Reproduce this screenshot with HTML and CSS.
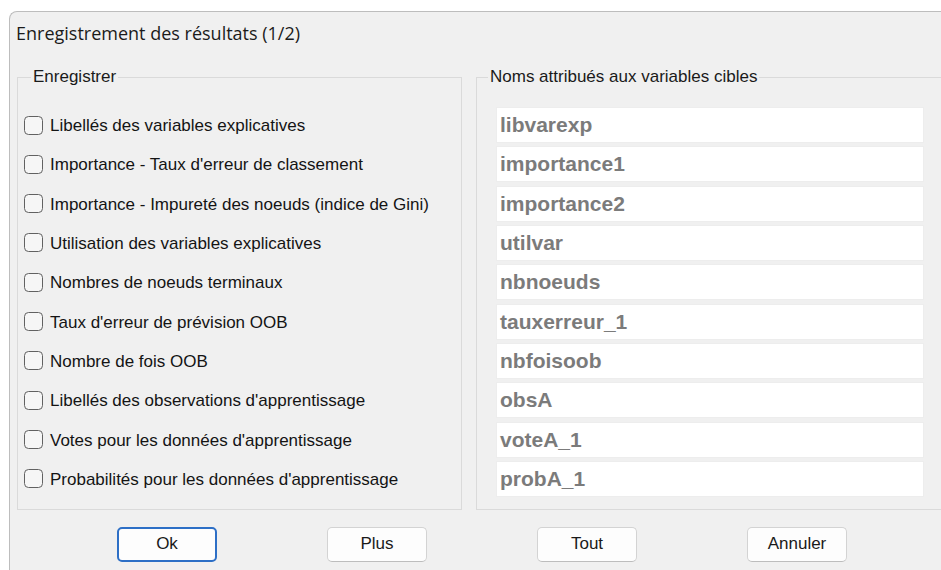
FILE: index.html
```html
<!DOCTYPE html>
<html lang="fr">
<head>
<meta charset="utf-8">
<title>Enregistrement des résultats (1/2)</title>
<link rel="stylesheet" href="styles.css">
</head>
<body>
<div class="window">
  <div class="titlebar">Enregistrement des résultats (1/2)</div>

  <div class="groups">
    <fieldset class="group group-save">
      <legend>Enregistrer</legend>
      <div class="rows">
        <label class="check"><span class="box"></span>Libellés des variables explicatives</label>
        <label class="check"><span class="box"></span>Importance - Taux d'erreur de classement</label>
        <label class="check"><span class="box"></span>Importance - Impureté des noeuds (indice de Gini)</label>
        <label class="check"><span class="box"></span>Utilisation des variables explicatives</label>
        <label class="check"><span class="box"></span>Nombres de noeuds terminaux</label>
        <label class="check"><span class="box"></span>Taux d'erreur de prévision OOB</label>
        <label class="check"><span class="box"></span>Nombre de fois OOB</label>
        <label class="check"><span class="box"></span>Libellés des observations d'apprentissage</label>
        <label class="check"><span class="box"></span>Votes pour les données d'apprentissage</label>
        <label class="check"><span class="box"></span>Probabilités pour les données d'apprentissage</label>
      </div>
    </fieldset>

    <fieldset class="group group-names">
      <legend>Noms attribués aux variables cibles</legend>
      <div class="rows">
        <div class="field">libvarexp</div>
        <div class="field">importance1</div>
        <div class="field">importance2</div>
        <div class="field">utilvar</div>
        <div class="field">nbnoeuds</div>
        <div class="field">tauxerreur_1</div>
        <div class="field">nbfoisoob</div>
        <div class="field">obsA</div>
        <div class="field">voteA_1</div>
        <div class="field">probA_1</div>
      </div>
    </fieldset>
  </div>

  <div class="buttons">
    <button class="btn btn-default">Ok</button>
    <button class="btn">Plus</button>
    <button class="btn">Tout</button>
    <button class="btn">Annuler</button>
  </div>
</div>
</body>
</html>
```

FILE: styles.css
```css
html, body {
  margin: 0;
  padding: 0;
  width: 941px;
  height: 570px;
  overflow: hidden;
  background: #ffffff;
}

body {
  font-family: "Liberation Sans", Arial, sans-serif;
  color: #1a1a1a;
}

/* dialog window; its right part is cut off at the edge of the screen */
.window {
  box-sizing: border-box;
  margin: 11px 0 0 9px;
  width: 932px;
  height: 559px;
  overflow: hidden;
  background: #f0f0f0;
  border-top: 1px solid #bdbdbd;
  border-left: 1px solid #bdbdbd;
  border-top-left-radius: 8px;
}

.titlebar {
  font-family: "Open Sans", "Noto Sans", sans-serif;
  font-size: 18px;
  line-height: 22px;
  padding: 10px 0 0 6px;
  color: #1b1b1b;
}

.groups {
  display: flex;
  gap: 14px;
  margin: 23px 0 0 7px;
}

.group {
  box-sizing: border-box;
  margin: 0;
  padding: 0 0 12px 0;
  min-width: 0;
  border: 1px solid #dadada;
  flex: none;
}

.group legend {
  font-size: 17px;
  line-height: 20px;
  padding: 0 2px;
}

.group-save { width: 445px; }
.group-save legend { margin-left: 13px; }

.group-names { width: 468px; }
.group-names legend { margin-left: 11px; }

.rows {
  display: grid;
  grid-template-rows: repeat(10, 36px);
  row-gap: 3.333px;
  margin-top: 20px;
}

.group-save .rows { padding-left: 6px; }
.group-names .rows { padding: 0 19px; }

.check {
  display: flex;
  align-items: center;
  gap: 7px;
  font-size: 17px;
  line-height: 20px;
  padding-top: 2px;
  color: #141414;
}

.box {
  box-sizing: border-box;
  width: 19px;
  height: 19px;
  margin-top: -2px;
  border: 1.5px solid #616161;
  border-radius: 4.5px;
  background: #f6f6f6;
  flex: none;
}

.field {
  box-sizing: border-box;
  height: 36px;
  background: #ffffff;
  border: 1px solid #ededed;
  padding-left: 3px;
  font-weight: bold;
  font-size: 21px;
  line-height: 34px;
  color: #7b7b7b;
}

.buttons {
  display: flex;
  gap: 110px;
  margin: 17px 0 0 107px;
}

.btn {
  box-sizing: border-box;
  width: 100px;
  height: 35px;
  padding: 0;
  font-family: "Liberation Sans", Arial, sans-serif;
  font-size: 17px;
  color: #1a1a1a;
  background: #fdfdfd;
  border: 1px solid #d3d3d3;
  border-bottom-color: #bdbdbd;
  border-radius: 5px;
}

.btn-default {
  border: 2px solid #2d6fc6;
}
```
